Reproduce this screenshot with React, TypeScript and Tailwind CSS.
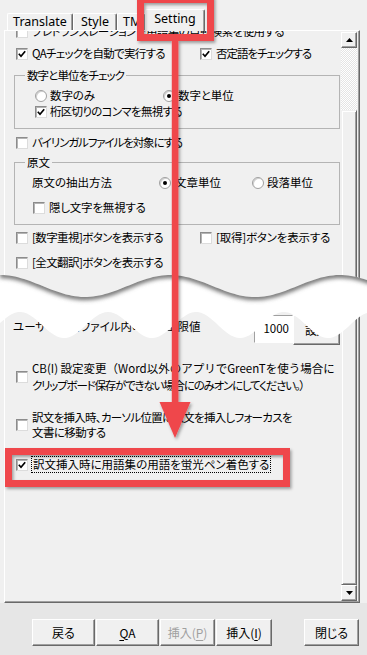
import React from 'react';

const jp = "font-['Noto_Sans_CJK_JP',sans-serif] [font-feature-settings:'palt']";
const RED = '#ef464c';

// torn-paper edges (page coordinates)
const upper = (x: number) => 286 - 11 * Math.cos((2 * Math.PI * x) / 170);
const lower = (x: number) => 325 - 13 * Math.cos((2 * Math.PI * (x - 20)) / 88);
const xs = Array.from({ length: 125 }, (_, i) => i * 3);
const upperLine = 'M' + xs.map((x) => `${x},${upper(x).toFixed(1)}`).join(' L');
const band =
  upperLine +
  ' L' +
  [...xs]
    .reverse()
    .map((x) => `${x},${lower(x).toFixed(1)}`)
    .join(' L') +
  ' Z';

function CheckBox({ checked }: { checked?: boolean }) {
  return (
    <span className="flex h-[12px] w-[12px] shrink-0 items-center justify-center border border-t-[#8c8c8c] border-l-[#8c8c8c] border-r-[#dcdcdc] border-b-[#dcdcdc] bg-white shadow-[inset_1px_1px_0_#b4b4b4]">
      {checked && (
        <svg width="8" height="8" viewBox="0 0 8 8">
          <path d="M0.8 3.8 L3 6.2 L7.2 1.2" fill="none" stroke="#000" strokeWidth="1.7" />
        </svg>
      )}
    </span>
  );
}

function Radio({ on }: { on?: boolean }) {
  return (
    <span className="flex h-[12px] w-[12px] shrink-0 items-center justify-center rounded-full border border-[#a0a0a0] bg-white shadow-[inset_1px_1px_0_#d0d0d0]">
      {on && <span className="h-[4px] w-[4px] rounded-full bg-black" />}
    </span>
  );
}

function Btn({
  children,
  className = '',
  disabled,
}: {
  children: React.ReactNode;
  className?: string;
  disabled?: boolean;
}) {
  return (
    <div
      className={`flex items-center justify-center border border-t-white border-l-white border-r-[#696969] border-b-[#696969] bg-[#f0f0f0] shadow-[inset_-1px_-1px_0_#a0a0a0] text-[12px] ${
        disabled ? 'text-[#a0a0a0]' : 'text-black'
      } ${className}`}
    >
      {children}
    </div>
  );
}

function Tab({ children, className = '' }: { children: React.ReactNode; className?: string }) {
  return (
    <div
      className={`flex h-[17px] items-center justify-center rounded-t-[2px] border-t border-l border-r border-t-white border-l-white border-r-[#696969] shadow-[inset_-1px_0_0_#a0a0a0] ${className}`}
    >
      {children}
    </div>
  );
}

function ScrollBtn({ up }: { up?: boolean }) {
  return (
    <div className="flex h-[16px] w-[16px] items-center justify-center border border-t-white border-l-white border-r-[#696969] border-b-[#696969] bg-[#f0f0f0] shadow-[inset_-1px_-1px_0_#a0a0a0]">
      <svg width="7" height="4" viewBox="0 0 7 4">
        <path d={up ? 'M0 4 L3.5 0 L7 4 Z' : 'M0 0 L7 0 L3.5 4 Z'} fill="#000" />
      </svg>
    </div>
  );
}

export default function App() {
  return (
    <div className="relative flex h-[655px] w-[367px] flex-col overflow-hidden bg-[#f0f0f0]">
      {/* Tabs */}
      <div className="flex h-[30px] shrink-0 items-end pl-[7px] font-['Noto_Sans',sans-serif] text-[12.5px] text-black">
        <Tab className="w-[66px]">Translate</Tab>
        <Tab className="w-[44px]">Style</Tab>
        <Tab className="w-[29px] justify-start pl-[5px]">TM</Tab>
        <div className="relative z-10 -mb-px -ml-px flex h-[22px] w-[60px] items-center justify-center rounded-t-[2px] border-t border-l border-r border-t-white border-l-white border-r-[#696969] bg-[#f0f0f0] pb-[2px] shadow-[inset_-1px_0_0_#a0a0a0]">
          Setting
        </div>
      </div>

      {/* Tab page */}
      <div className="ml-[4px] flex h-[573px] w-[356px] shrink-0 border-t border-l border-r border-b border-t-white border-l-white border-r-[#696969] border-b-[#696969] bg-[#f0f0f0] shadow-[inset_-1px_-1px_0_#a0a0a0]">
        <div className={`w-[336px] overflow-hidden ${jp} text-[11.5px] tracking-[-0.6px] text-black`}>
          <div className="-mt-[8px] flex flex-col whitespace-nowrap">
            <div className="flex h-[18px] items-center gap-[4px] pl-[11px]">
              <CheckBox />
              <span>プレトランスレーションで用語集の自動検索を使用する</span>
            </div>

            <div className="mt-[4px] flex h-[18px] items-center pl-[11px]">
              <div className="flex w-[184px] items-center gap-[4px]">
                <CheckBox checked />
                <span className="tracking-[-0.7px]">QAチェックを自動で実行する</span>
              </div>
              <div className="flex items-center gap-[4px]">
                <CheckBox checked />
                <span className="tracking-[-1px]">否定語をチェックする</span>
              </div>
            </div>

            <fieldset className="mt-[5px] ml-[9px] mr-px border border-[#b4b4b4] pb-[8px]">
              <legend className="ml-[10px] px-[2px] leading-[14px] tracking-[-0.9px]">数字と単位をチェック</legend>
              <div className="mt-[6px] flex h-[16px] items-center pl-[20px] tracking-[-0.1px]">
                <div className="flex w-[128px] items-center gap-[3px]">
                  <Radio />
                  <span>数字のみ</span>
                </div>
                <div className="flex items-center gap-[3px]">
                  <Radio on />
                  <span>数字と単位</span>
                </div>
              </div>
              <div className="flex h-[16px] items-center gap-[3px] pl-[20px]">
                <CheckBox checked />
                <span className="tracking-[-0.7px]">桁区切りのコンマを無視する</span>
              </div>
            </fieldset>

            <div className="mt-[5px] flex h-[18px] items-center gap-[4px] pl-[11px]">
              <CheckBox />
              <span className="tracking-[-1.1px]">バイリンガルファイルを対象にする</span>
            </div>

            <fieldset className="mt-[3px] ml-[9px] mr-px border border-[#b4b4b4] pb-[8px]">
              <legend className="ml-[10px] px-[2px] leading-[14px] tracking-normal">原文</legend>
              <div className="mt-[6px] flex h-[16px] items-center pl-[17px] tracking-normal">
                <span className="w-[127px]">原文の抽出方法</span>
                <div className="flex w-[93px] items-center gap-[4px]">
                  <Radio on />
                  <span>文章単位</span>
                </div>
                <div className="flex items-center gap-[3px]">
                  <Radio />
                  <span>段落単位</span>
                </div>
              </div>
              <div className="mt-[9px] flex h-[16px] items-center gap-[4px] pl-[18px]">
                <CheckBox />
                <span className="tracking-[-0.2px]">隠し文字を無視する</span>
              </div>
            </fieldset>

            <div className="mt-[4px] flex h-[18px] items-center pl-[11px]">
              <div className="flex w-[184px] items-center gap-[4px]">
                <CheckBox />
                <span>[数字重視]ボタンを表示する</span>
              </div>
              <div className="flex items-center gap-[4px]">
                <CheckBox />
                <span className="tracking-[-0.2px]">[取得]ボタンを表示する</span>
              </div>
            </div>

            <div className="mt-[7px] flex h-[18px] items-center gap-[4px] pl-[11px]">
              <CheckBox />
              <span>[全文翻訳]ボタンを表示する</span>
            </div>

            <div className="mt-[43px] flex h-[30px] items-start pl-[8px]">
              <span className="mt-[4px] w-[241px] leading-[14px] tracking-normal">ユーザー辞書ファイル内の検索上限値</span>
              <div className="flex h-[28px] w-[39px] items-center justify-end border border-t-[#a0a0a0] border-l-[#a0a0a0] border-r-white border-b-white bg-white pr-[3px] tracking-normal">
                1000
              </div>
              <Btn className="h-[30px] w-[47px]">設定</Btn>
            </div>

            <div className="mt-[15px] flex items-center gap-[4px] pl-[11px]">
              <CheckBox />
              <div className="leading-[17px]">
                <div className="tracking-normal [font-feature-settings:normal]">
                  CB(I) 設定変更（Word以外のアプリでGreenTを使う場合に
                </div>
                <div className="tracking-[-1.2px]">クリップボード保存ができない場合にのみオンにしてください。）</div>
              </div>
            </div>

            <div className="mt-[16px] flex items-center gap-[4px] pl-[11px]">
              <CheckBox />
              <div className="leading-[15px]">
                <div className="tracking-[-0.7px]">訳文を挿入時、カーソル位置に訳文を挿入しフォーカスを</div>
                <div>文書に移動する</div>
              </div>
            </div>

            <div className="mt-[16px] flex h-[17px] items-center gap-[3px] pl-[11px]">
              <CheckBox checked />
              <span className="flex h-[17px] items-center border border-dotted border-black px-[1px] tracking-normal">
                訳文挿入時に用語集の用語を蛍光ペン着色する
              </span>
            </div>
          </div>
        </div>

        {/* Scrollbar */}
        <div className="mt-px mb-px mr-[2px] flex w-[16px] flex-col">
          <ScrollBtn up />
          <div className="h-[62px] bg-[repeating-conic-gradient(#ffffff_0_25%,#e4e4e4_0_50%)] bg-[length:2px_2px]" />
          <div className="flex-1 border border-t-[#f0f0f0] border-l-[#f0f0f0] border-r-[#696969] border-b-[#696969] bg-[#f0f0f0] shadow-[inset_1px_1px_0_#ffffff,inset_-1px_-1px_0_#a0a0a0]" />
          <ScrollBtn />
        </div>
      </div>

      {/* Footer buttons */}
      <div className={`flex flex-1 items-start bg-[#e6e6e6] pt-[16px] pr-[8px] pl-[32px] ${jp}`}>
        <div className="flex gap-px">
          <Btn className="h-[27px] w-[63px]">戻る</Btn>
          <Btn className="h-[27px] w-[63px]">
            <span className="underline underline-offset-2">Q</span>A
          </Btn>
          <Btn className="h-[27px] w-[55px]" disabled>
            挿入(<span className="underline underline-offset-2">P</span>)
          </Btn>
          <Btn className="h-[27px] w-[56px]">
            挿入(<span className="underline underline-offset-2">I</span>)
          </Btn>
        </div>
        <Btn className="ml-auto h-[27px] w-[55px]">閉じる</Btn>
      </div>

      {/* Annotation overlay: torn paper, arrow, highlight boxes */}
      <svg
        className="pointer-events-none absolute top-0 left-0 z-20"
        width="367"
        height="655"
        viewBox="0 0 367 655"
      >
        <defs>
          <filter id="soft" x="-20%" y="-50%" width="140%" height="200%">
            <feGaussianBlur stdDeviation="2.2" />
          </filter>
          <filter id="ds" x="-20%" y="-20%" width="140%" height="140%">
            <feDropShadow dx="1.5" dy="2" stdDeviation="1.5" floodColor="#000" floodOpacity="0.35" />
          </filter>
          <clipPath id="band">
            <path d={band} />
          </clipPath>
        </defs>

        <path d={band} fill="#ffffff" />
        <g clipPath="url(#band)">
          <path d={upperLine} fill="none" stroke="#707070" strokeWidth="6" filter="url(#soft)" />
        </g>

        <g filter="url(#ds)">
          <rect x="140.5" y="-0.5" width="70" height="38" fill="none" stroke={RED} strokeWidth="7" />
          <rect x="171.8" y="41" width="6.6" height="364" fill={RED} />
          <polygon points="159.5,402 190.5,402 175,438" fill={RED} />
          <rect x="8.5" y="451.5" width="278" height="32" fill="none" stroke={RED} strokeWidth="7" />
        </g>
      </svg>
    </div>
  );
}
